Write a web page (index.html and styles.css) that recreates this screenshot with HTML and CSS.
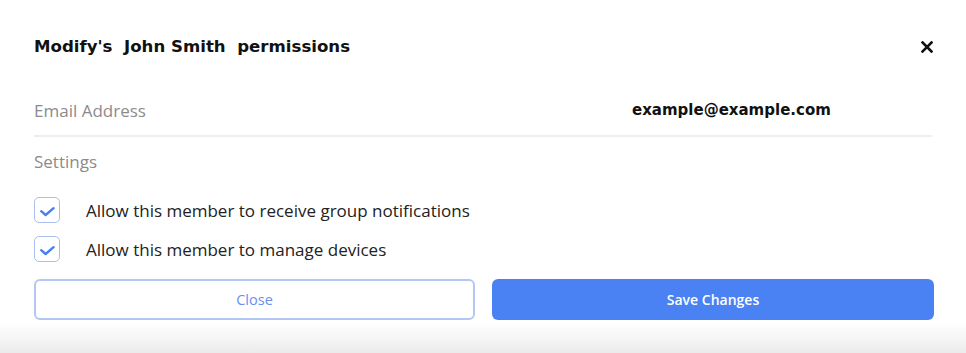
FILE: index.html
```html
<!DOCTYPE html>
<html lang="en">
<head>
<meta charset="utf-8">
<title>Modify permissions</title>
<link rel="stylesheet" href="styles.css">
</head>
<body>
<div class="modal">
  <div class="header">
    <h1 class="title">Modify's&nbsp; John Smith&nbsp; permissions</h1>
    <button class="x-btn" aria-label="Close">
      <svg width="12" height="12" viewBox="0 0 12 12"><path d="M1.5 1.5 L10.5 10.5 M10.5 1.5 L1.5 10.5" stroke="#111" stroke-width="2.6" stroke-linecap="square"/></svg>
    </button>
  </div>
  <div class="email-row">
    <span class="label">Email Address</span>
    <span class="email">example@example.com</span>
  </div>
  <div class="settings">Settings</div>
  <label class="check-row first">
    <span class="box"><svg width="26" height="26" viewBox="0 0 26 26"><path d="M7.2 14.2 L11.6 18 L19.6 11.2" fill="none" stroke="#4a7ff0" stroke-width="2.4" stroke-linecap="round" stroke-linejoin="round"/></svg></span>
    <span class="check-text">Allow this member to receive group notifications</span>
  </label>
  <label class="check-row">
    <span class="box"><svg width="26" height="26" viewBox="0 0 26 26"><path d="M7.2 14.2 L11.6 18 L19.6 11.2" fill="none" stroke="#4a7ff0" stroke-width="2.4" stroke-linecap="round" stroke-linejoin="round"/></svg></span>
    <span class="check-text">Allow this member to manage devices</span>
  </label>
  <div class="actions">
    <button class="btn btn-outline">Close</button>
    <button class="btn btn-primary">Save Changes</button>
  </div>
</div>
</body>
</html>
```

FILE: styles.css
```css
html, body {
  margin: 0;
  padding: 0;
}
body {
  width: 966px;
  height: 353px;
  overflow: hidden;
  background: linear-gradient(to bottom, #ffffff 0, #ffffff 322px, #f6f6f6 337px, #ebebeb 353px);
  font-family: "Open Sans", "Noto Sans", sans-serif;
}
.modal {
  padding: 0 32px 0 34px;
}
.header {
  height: 92px;
  display: flex;
  align-items: center;
  justify-content: space-between;
}
.title {
  margin: 0;
  font-family: "DejaVu Sans", sans-serif;
  font-weight: bold;
  font-size: 16.6px;
  color: #111;
}
.x-btn {
  border: 0;
  background: none;
  padding: 0;
  margin-right: 1px;
  margin-top: 2px;
  width: 12px;
  height: 12px;
  display: flex;
}
.email-row {
  display: grid;
  grid-template-columns: 598px 1fr;
  align-items: center;
  height: 36px;
  padding-bottom: 7px;
  border-bottom: 2px solid #eeeeee;
  margin-right: 2px;
}
.label, .settings {
  color: #8b8b8b;
  font-size: 17px;
}
.email {
  font-family: "DejaVu Sans", sans-serif;
  font-weight: bold;
  font-size: 15px;
  color: #111;
}
.settings {
  margin-top: 13px;
  line-height: 24px;
}
.check-row {
  display: flex;
  align-items: center;
  height: 26px;
  margin-top: 13px;
}
.check-row.first {
  margin-top: 23px;
}
.box {
  width: 26px;
  height: 26px;
  border: 1.5px solid #abbef2;
  border-radius: 5px;
  box-sizing: border-box;
  position: relative;
  flex: none;
}
.box svg {
  position: absolute;
  left: -1.5px;
  top: -1.5px;
  display: block;
}
.check-text {
  margin-left: 26px;
  font-size: 17px;
  color: #222;
}
.actions {
  display: grid;
  grid-template-columns: 441px 442px;
  column-gap: 17px;
  margin-top: 17px;
}
.btn {
  height: 41px;
  border-radius: 6px;
  font-family: "Open Sans", "Noto Sans", sans-serif;
  font-size: 14.5px;
  cursor: pointer;
}
.btn-outline {
  background: #fff;
  border: 2px solid #b3c6f4;
  color: #6a8ff0;
}
.btn-primary {
  background: #4a82f4;
  border: 0;
  color: #fff;
  font-weight: 600;
  font-size: 14px;
}
```
